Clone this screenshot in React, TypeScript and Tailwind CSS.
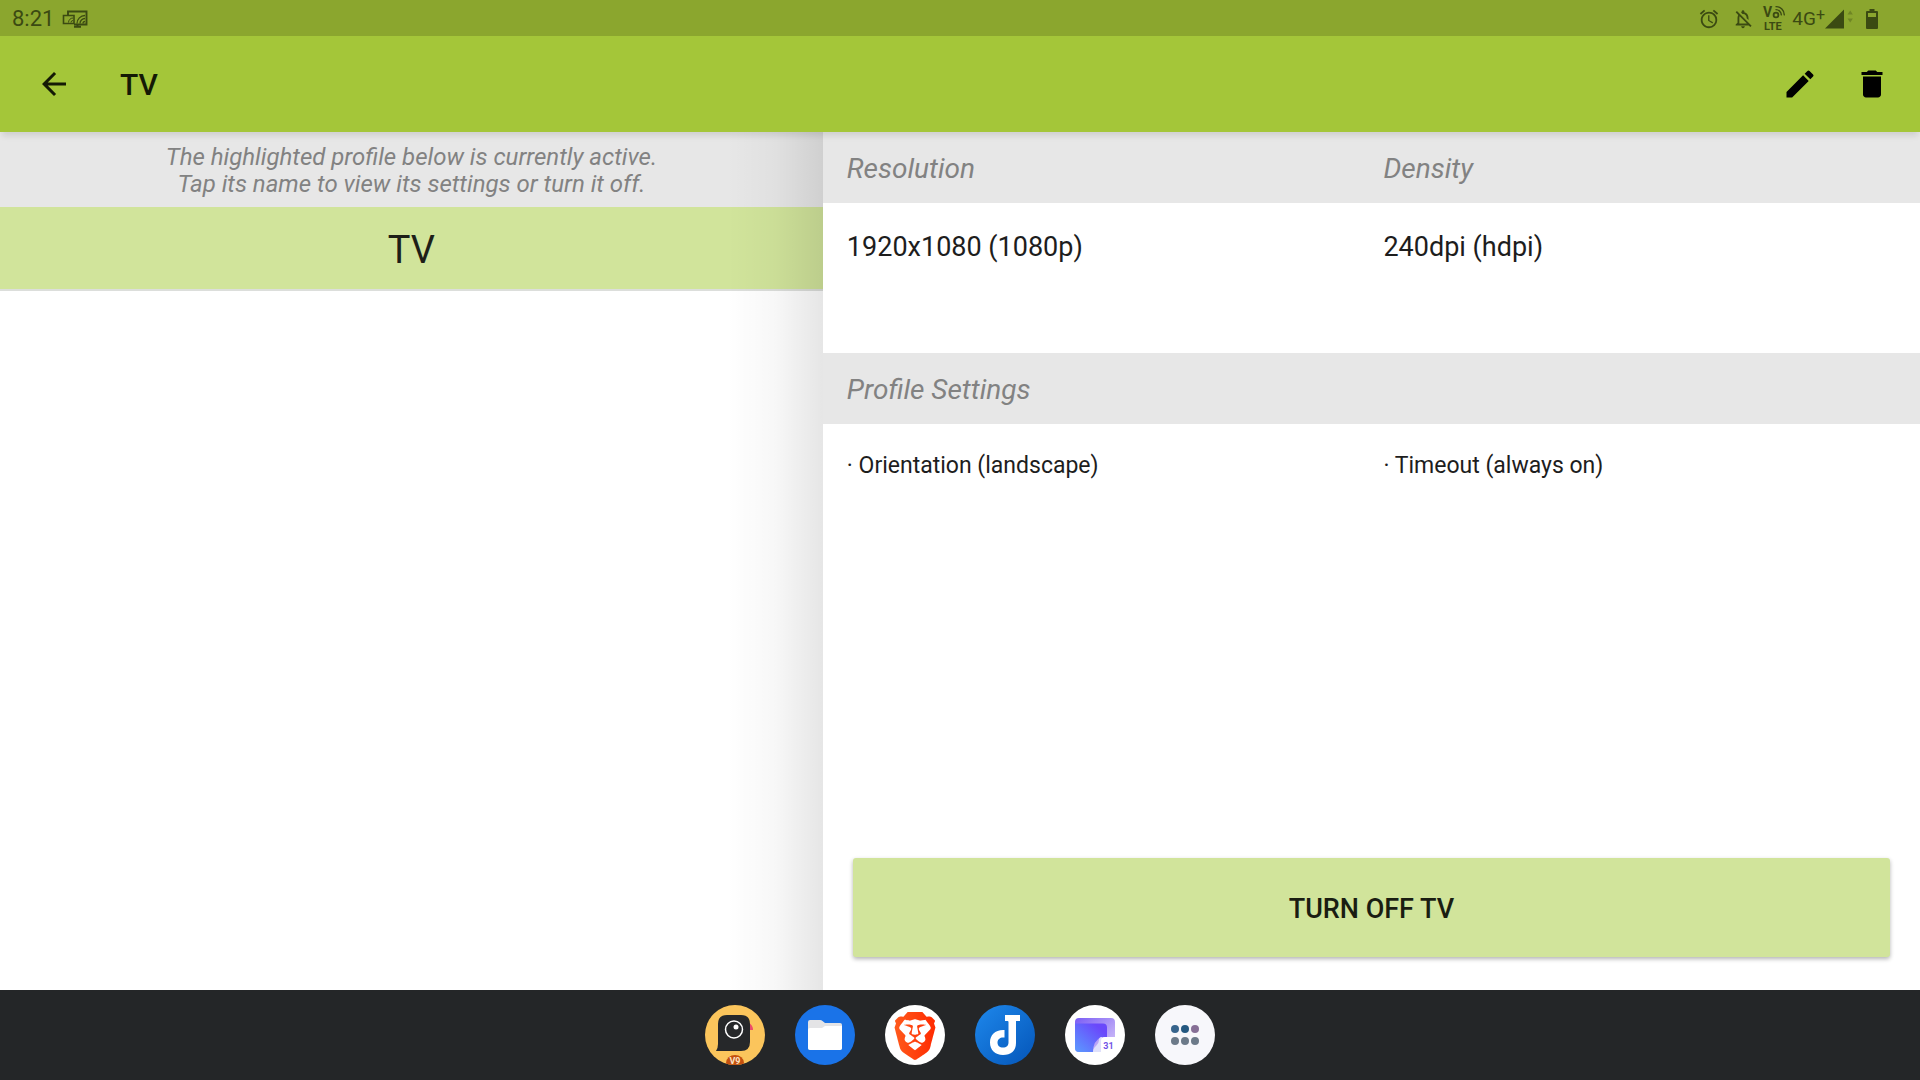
import React from 'react';
import { clsx } from 'clsx';
import { MdAlarm, MdArrowBack, MdDelete, MdEdit, MdOutlineNotificationsOff } from 'react-icons/md';
import { SiBrave } from 'react-icons/si';

const PROFILES = [{ id: 'tv', name: 'TV', active: true }];

const SPECS = [
  { label: 'Resolution', value: '1920x1080 (1080p)' },
  { label: 'Density', value: '240dpi (hdpi)' },
];

const SETTINGS = ['Orientation (landscape)', 'Timeout (always on)'];

function CastIcon() {
  return (
    <svg width="26" height="18" viewBox="0 0 26 18" fill="none" stroke="currentColor" strokeWidth="1.6">
      <path d="M6 5V1.500h18.500v13H12" strokeWidth="1.9" />
      <path d="M6.500 5.500h-5v8H12v-8z" />
      <path d="M15 13.500a8 8 0 0 1 8-8M18 13.500a5 5 0 0 1 5-5M21 13.500a2 2 0 0 1 2-2" strokeWidth="1.3" />
      <path d="M6.500 12.500a4.500 4.500 0 0 1 4.500-4.500M9 12.500a2 2 0 0 1 2-2" strokeWidth="1" />
      <path d="M12 16.800h7M15.500 14.500v2" strokeWidth="2" />
    </svg>
  );
}

function VolteIcon() {
  return (
    <svg width="24" height="30" viewBox="0 -1 24 30" fill="currentColor" className="font-['Roboto',sans-serif]">
      <text x="1" y="12" fontSize="14" fontWeight="700">V</text>
      <circle cx="14" cy="10" r="2.4" fill="none" stroke="currentColor" strokeWidth="1.8" />
      <path d="M13.500 4.600a5.400 5.400 0 0 1 5.800 5.800M13.500 1.600a8.400 8.400 0 0 1 8.800 8.800" fill="none" stroke="currentColor" strokeWidth="1.4" />
      <text x="2" y="25" fontSize="11" fontWeight="700">LTE</text>
    </svg>
  );
}

function SignalIcon() {
  return (
    <svg width="29" height="20" viewBox="0 0 29 20" fill="currentColor">
      <path d="M0 19.500 19 0.500v19z" />
      <path d="M22.500 5.500 25.200 1.500l2.700 4zM22.500 9.500h5.400l-2.700 4z" opacity="0.35" />
    </svg>
  );
}

function BatteryIcon() {
  return (
    <svg width="12" height="20" viewBox="0 0 12 20" fill="currentColor">
      <path fillRule="evenodd" d="M3.500 0h5v2H11a1 1 0 0 1 1 1v16a1 1 0 0 1-1 1H1a1 1 0 0 1-1-1V3a1 1 0 0 1 1-1h2.500zM2 4v4h8V4z" />
    </svg>
  );
}

function StatusBar() {
  return (
    <div className="flex h-9 items-center justify-between bg-[#8ba62e] pl-3 pr-[42px] pt-0.5 text-[#3b4a12]">
      <div className="flex items-center gap-2">
        <span className="text-[22px] leading-6">8:21</span>
        <CastIcon />
      </div>
      <div className="flex items-center">
        <MdAlarm size={22} />
        <MdOutlineNotificationsOff size={22} className="ml-3" />
        <span className="ml-2">
          <VolteIcon />
        </span>
        <span className="ml-1.5 flex text-[19px] leading-6">
          4G<span className="text-base leading-4">+</span>
        </span>
        <SignalIcon />
        <span className="ml-3">
          <BatteryIcon />
        </span>
      </div>
    </div>
  );
}

function TopBar() {
  return (
    <header className="relative z-10 flex h-24 items-center bg-[#a4c639] pl-[30px] pr-6 shadow-[0_6px_6px_-2px_rgba(0,0,0,0.1)]">
      <button type="button" aria-label="Back" className="p-1.5 text-[#141a05]">
        <MdArrowBack size={36} />
      </button>
      <h1 className="ml-[42px] pt-0.5 text-[30px] font-medium leading-9 text-[#141a05]">TV</h1>
      <div className="ml-auto flex gap-6">
        <button type="button" aria-label="Edit profile" className="p-1.5 text-black">
          <MdEdit size={36} />
        </button>
        <button type="button" aria-label="Delete profile" className="p-1.5 text-black">
          <MdDelete size={36} />
        </button>
      </div>
    </header>
  );
}

function ProfileList() {
  return (
    <nav className="relative flex-[3] bg-white">
      <p className="bg-[#e7e7e7] pb-[9px] pt-3 text-center text-2xl italic leading-[27px] text-[#828282]">
        The highlighted profile below is currently active.
        <br />
        Tap its name to view its settings or turn it off.
      </p>
      <ul>
        {PROFILES.map(profile => (
          <li key={profile.id} className="border-b-2 border-[#dcdedb]">
            <button
              type="button"
              className={clsx('h-[82px] w-full pt-1 text-[38px] text-[#1d1f18]', profile.active && 'bg-[#d1e49b]')}
            >
              {profile.name}
            </button>
          </li>
        ))}
      </ul>
      {/* Shade cast by the detail pane */}
      <div className="pointer-events-none absolute inset-y-0 right-0 w-24 bg-linear-to-r from-black/0 via-black/3 to-black/10" />
    </nav>
  );
}

function SectionHeader({ labels }: { labels: string[] }) {
  return (
    <div className="flex h-[71px] items-center bg-[#e7e7e7] pl-6 pt-0.5">
      {labels.map(label => (
        <h2 key={label} className="flex-1 text-[28px] italic leading-8 text-[#828282]">
          {label}
        </h2>
      ))}
    </div>
  );
}

function ProfileDetail() {
  return (
    <main className="flex flex-[4] flex-col bg-white text-[#1d1d1d]">
      <SectionHeader labels={SPECS.map(s => s.label)} />
      <div className="flex h-[150px] pl-6 pt-7">
        {SPECS.map(spec => (
          <p key={spec.label} className="flex-1 text-[27px] leading-8">
            {spec.value}
          </p>
        ))}
      </div>
      <SectionHeader labels={['Profile Settings']} />
      <ul className="flex pl-6 pt-7">
        {SETTINGS.map(setting => (
          <li key={setting} className="flex-1 text-[23px] leading-7">
            · {setting}
          </li>
        ))}
      </ul>
      <button
        type="button"
        className="mx-[30px] mb-[33px] mt-auto h-[99px] rounded-[3px] bg-[#d1e49b] pt-1 text-[27px] font-medium text-[#1a1d12] shadow-[0_2px_4px_rgba(0,0,0,0.3)]"
      >
        TURN OFF TV
      </button>
    </main>
  );
}

function BirdIcon() {
  return (
    <svg width="60" height="60" viewBox="0 0 60 60">
      <defs>
        <clipPath id="bird-disc">
          <circle cx="30" cy="30" r="30" />
        </clipPath>
      </defs>
      <g clipPath="url(#bird-disc)">
        <rect width="60" height="60" fill="#fbc55c" />
        <path d="M43 17q5 3 5 8h-5z" fill="#ee4b6a" />
        <path d="M11 46q2-3 2-7V19q0-9 9-9h14q9 0 9 9v18q0 9-9 9z" fill="#26282a" />
        <circle cx="29" cy="24.500" r="8.500" fill="none" stroke="#fff" strokeWidth="1.500" />
        <circle cx="31" cy="22" r="2.500" fill="#fff" />
        <ellipse cx="30" cy="58" rx="9" ry="8" fill="#c4500f" />
        <text x="30" y="59" textAnchor="middle" fontSize="9" fontWeight="700" fill="#fbe3c4">V9</text>
      </g>
    </svg>
  );
}

function FilesIcon() {
  return (
    <svg width="60" height="60" viewBox="0 0 60 60">
      <circle cx="30" cy="30" r="30" fill="#1a73e8" />
      <path d="M13 42.500V17q0-2 2-2h10q1.500 0 2.500 1l2.500 2h15q2 0 2 2v22.500q0 2.500-2.500 2.500h-29q-2.500 0-2.500-2.500z" fill="#e4e4e6" />
      <path d="M13 25q0-2 2-2h12l3-2h17v21.500q0 2.500-2.500 2.500h-29q-2.500 0-2.500-2.500z" fill="#fff" />
    </svg>
  );
}

function BraveIcon() {
  return (
    <svg width="60" height="60" viewBox="0 0 60 60">
      <defs>
        <linearGradient id="brave-fill" x1="0" y1="0" x2="1" y2="0">
          <stop offset="0" stopColor="#ff5a1c" />
          <stop offset="1" stopColor="#ff2a00" />
        </linearGradient>
      </defs>
      <circle cx="30" cy="30" r="30" fill="#fff" />
      <SiBrave x="6" y="7" size={48} fill="url(#brave-fill)" color="#ff4010" />
    </svg>
  );
}

function JoplinIcon() {
  return (
    <svg width="60" height="60" viewBox="0 0 60 60">
      <defs>
        <linearGradient id="joplin-fill" x1="0" y1="0" x2="1" y2="1">
          <stop offset="0" stopColor="#1e88ec" />
          <stop offset="1" stopColor="#0455b8" />
        </linearGradient>
      </defs>
      <circle cx="30" cy="30" r="30" fill="url(#joplin-fill)" />
      <path d="M30 10h15v6h-4v22c0 8-5 12-13 12s-13-5-13-12.500S20 25 28 25h1.500v7.500H28c-3 0-5.500 2-5.500 5s2 5 5.500 5 5.500-2 5.500-5V17q0-1-1-1H30z" fill="#fff" />
    </svg>
  );
}

function CalendarIcon() {
  return (
    <svg width="60" height="60" viewBox="0 0 60 60">
      <defs>
        <linearGradient id="cal-back" x1="0" y1="0" x2="1" y2="1">
          <stop offset="0" stopColor="#7a5cf5" />
          <stop offset="1" stopColor="#dccdf8" />
        </linearGradient>
        <linearGradient id="cal-front" x1="1" y1="0" x2="0" y2="1">
          <stop offset="0.200" stopColor="#6a48fb" />
          <stop offset="1" stopColor="#5b9bff" />
        </linearGradient>
      </defs>
      <circle cx="30" cy="30" r="30" fill="#fff" />
      <path d="M14 13h32q4 0 4 4v16H36v14H14q-4 0-4-4V17q0-4 4-4z" fill="url(#cal-back)" />
      <path d="M10 18.500h28q4 0 4 4V32H36q-8 4-8 15H14q-4 0-4-4z" fill="url(#cal-front)" />
      <path d="M28 47c0-3 1-4 3-6q3-3 3-6 0-3 3-3v15z" fill="#dfe0fb" />
      <path d="M36 47V36q0-4 4-4h10v15z" fill="#fff" />
      <text x="43.500" y="43.500" textAnchor="middle" fontSize="9" fontWeight="700" fill="#7253e6">31</text>
    </svg>
  );
}

function AppsIcon() {
  return (
    <svg width="60" height="60" viewBox="0 0 60 60">
      <circle cx="30" cy="30" r="30" fill="#f7f7fb" />
      <circle cx="20" cy="24" r="4" fill="#37648c" />
      <circle cx="30" cy="24" r="4" fill="#245880" />
      <circle cx="40" cy="24" r="4" fill="#866f96" />
      <circle cx="20" cy="36" r="4" fill="#6c7a89" />
      <circle cx="30" cy="36" r="4" fill="#6c7a89" />
      <circle cx="40" cy="36" r="4" fill="#6c7a89" />
    </svg>
  );
}

const DOCK = [
  { name: 'Bird', icon: <BirdIcon /> },
  { name: 'Files', icon: <FilesIcon /> },
  { name: 'Brave', icon: <BraveIcon /> },
  { name: 'Joplin', icon: <JoplinIcon /> },
  { name: 'Calendar', icon: <CalendarIcon /> },
  { name: 'All apps', icon: <AppsIcon /> },
];

export default function App() {
  return (
    <div className="flex min-h-screen flex-col font-['Roboto',sans-serif]">
      <StatusBar />
      <TopBar />
      <div className="flex flex-1">
        <ProfileList />
        <ProfileDetail />
      </div>
      <footer className="flex h-[90px] items-center justify-center gap-[30px] bg-[#242628]">
        {DOCK.map(app => (
          <button key={app.name} type="button" aria-label={app.name}>
            {app.icon}
          </button>
        ))}
      </footer>
    </div>
  );
}
